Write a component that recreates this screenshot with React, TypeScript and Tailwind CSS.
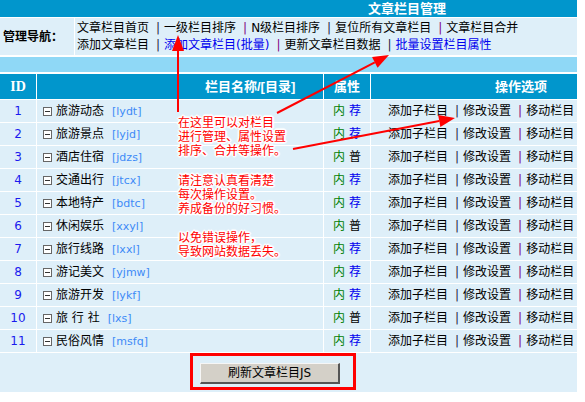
import React from "react";

type Column = { id: number; name: string; dir: string; tag: "荐" | "普" };

const columns: Column[] = [
  { id: 1, name: "旅游动态", dir: "lydt", tag: "荐" },
  { id: 2, name: "旅游景点", dir: "lyjd", tag: "荐" },
  { id: 3, name: "酒店住宿", dir: "jdzs", tag: "普" },
  { id: 4, name: "交通出行", dir: "jtcx", tag: "荐" },
  { id: 5, name: "本地特产", dir: "bdtc", tag: "荐" },
  { id: 6, name: "休闲娱乐", dir: "xxyl", tag: "普" },
  { id: 7, name: "旅行线路", dir: "lxxl", tag: "荐" },
  { id: 8, name: "游记美文", dir: "yjmw", tag: "荐" },
  { id: 9, name: "旅游开发", dir: "lykf", tag: "荐" },
  { id: 10, name: "旅 行 社", dir: "lxs", tag: "普" },
  { id: 11, name: "民俗风情", dir: "msfq", tag: "荐" },
];

// Small "collapse" box drawn in front of each column name
function MinusBox() {
  return (
    <svg width="9" height="9" viewBox="0 0 9 9" className="shrink-0">
      <rect x="0.5" y="0.5" width="8" height="8" fill="#fff" stroke="#666" />
      <line x1="2" y1="4.5" x2="7" y2="4.5" stroke="#333" />
    </svg>
  );
}

function Sep({ purple = false }: { purple?: boolean }) {
  return (
    <span className={`ml-[7px] mr-[4px] ${purple ? "text-[#800080]" : "text-[#222244]"}`}>|</span>
  );
}

// Arrowhead triangle for the red callout arrows
function arrow(x1: number, y1: number, x2: number, y2: number, len = 16, w = 6) {
  const dx = x2 - x1;
  const dy = y2 - y1;
  const d = Math.hypot(dx, dy);
  const ux = dx / d;
  const uy = dy / d;
  const bx = x2 - ux * len;
  const by = y2 - uy * len;
  const px = -uy;
  const py = ux;
  return {
    line: { x1, y1, x2: bx, y2: by },
    head: `${x2},${y2} ${bx + px * w},${by + py * w} ${bx - px * w},${by - py * w}`,
  };
}

const arrows = [
  arrow(178, 112, 178, 35),
  arrow(277, 113, 389, 55),
  arrow(293, 149, 455, 118),
];

const halo =
  "[text-shadow:1px_0_0_#fff,-1px_0_0_#fff,0_1px_0_#fff,0_-1px_0_#fff,1px_1px_0_#fff,-1px_-1px_0_#fff,1px_-1px_0_#fff,-1px_1px_0_#fff,2px_0_1px_#fff,-2px_0_1px_#fff,0_2px_1px_#fff,0_-2px_1px_#fff]";

export default function App() {
  return (
    <div className="relative w-[585px] h-[402px] bg-white text-[12px] text-black [font-family:'DejaVu_Sans','Noto_Sans_CJK_SC',sans-serif] leading-none">
      <div className="w-[577px] flex flex-col">
        {/* Title bar */}
        <div className="h-[17px] bg-[#0196cc] flex items-center pl-[368px]">
          <span className="text-white font-bold text-[13px]">文章栏目管理</span>
        </div>

        {/* Navigation */}
        <div className="mt-px h-[37px] flex gap-px">
          <div className="w-[74px] bg-[#deeff9] flex items-center pl-[3px] font-bold">管理导航：</div>
          <div className="flex-1 bg-[#deeff9] flex flex-col justify-center gap-[5px] pl-[2px] whitespace-nowrap">
            <div className="flex items-center">
              <span>文章栏目首页</span>
              <Sep />
              <span>一级栏目排序</span>
              <Sep purple />
              <span>N级栏目排序</span>
              <Sep />
              <span>复位所有文章栏目</span>
              <Sep purple />
              <span>文章栏目合并</span>
            </div>
            <div className="flex items-center">
              <span>添加文章栏目</span>
              <Sep />
              <span className="text-[#0000ee]">添加文章栏目(批量)</span>
              <Sep purple />
              <span>更新文章栏目数据</span>
              <Sep />
              <span className="text-[#0000ee]">批量设置栏目属性</span>
            </div>
          </div>
        </div>

        <div className="mt-[2px] h-[15px] bg-[#8fd8f6]" />

        {/* Column table */}
        <div className="mt-[2px] flex flex-col gap-px">
          <div className="h-[25px] flex gap-px bg-white text-white font-bold text-[13px]">
            <div className="w-[36px] bg-[#0196cc] flex items-center justify-center text-[14px] [font-family:'Liberation_Serif',serif]">ID</div>
            <div className="w-[286px] bg-[#0196cc] flex items-center pl-[168px] [font-family:'Liberation_Sans','Noto_Sans_CJK_SC',sans-serif]">栏目名称/[目录]</div>
            <div className="w-[46px] bg-[#0196cc] flex items-center justify-center">属性</div>
            <div className="flex-1 bg-[#0196cc] flex items-center pl-[124px]">操作选项</div>
          </div>

          {columns.map((c) => (
            <div key={c.id} className="h-[22px] flex gap-px">
              <div className="w-[36px] bg-[#deeff9] flex items-center justify-center text-[#1a1aee]">{c.id}</div>
              <div className="w-[286px] bg-[#deeff9] flex items-center pl-[6px] whitespace-pre">
                <MinusBox />
                <span className="ml-[4px]">{c.name}</span>
                <span className="ml-[8px] text-[11px] text-[#3d8af7]">[{c.dir}]</span>
              </div>
              <div className="w-[46px] bg-[#deeff9] flex items-center justify-center gap-[4px]">
                <span className="text-[#008000]">内</span>
                <span className={c.tag === "荐" ? "text-[#0000ee]" : "text-black"}>{c.tag}</span>
              </div>
              <div className="flex-1 bg-[#deeff9] flex items-center pl-[17px] whitespace-nowrap">
                <span>添加子栏目</span>
                <Sep />
                <span>修改设置</span>
                <Sep purple />
                <span>移动栏目</span>
              </div>
            </div>
          ))}

          <div className="h-[39px] bg-[#deeff9] pl-[200px] pt-[10px]">
            <button
              type="button"
              className="w-[140px] h-[21px] bg-[#d4d0c8] border-t border-l border-t-[#f6f6f6] border-l-[#f6f6f6] border-r-2 border-b-2 border-r-[#555] border-b-[#555] text-[12px] text-black"
            >
              刷新文章栏目JS
            </button>
          </div>
        </div>
      </div>

      {/* Red callouts */}
      <svg className="absolute left-0 top-0 pointer-events-none" width="585" height="402">
        {arrows.map((a, i) => (
          <g key={i}>
            <line {...a.line} stroke="#f00" strokeWidth="2" />
            <polygon points={a.head} fill="#f00" />
          </g>
        ))}
      </svg>

      <div className={`absolute left-[178px] top-[116px] text-[#f00] leading-[14px] ${halo}`}>
        <div>在这里可以对栏目</div>
        <div>进行管理、属性设置</div>
        <div>排序、合并等操作。</div>
      </div>
      <div className={`absolute left-[178px] top-[174px] text-[#f00] leading-[14px] ${halo}`}>
        <div>请注意认真看清楚</div>
        <div>每次操作设置。</div>
        <div>养成备份的好习惯。</div>
      </div>
      <div className={`absolute left-[178px] top-[231px] text-[#f00] leading-[14px] ${halo}`}>
        <div>以免错误操作，</div>
        <div>导致网站数据丢失。</div>
      </div>

      <div className="absolute left-[190px] top-[353px] w-[166px] h-[37px] border-[3px] border-[#f00] pointer-events-none" />
    </div>
  );
}
